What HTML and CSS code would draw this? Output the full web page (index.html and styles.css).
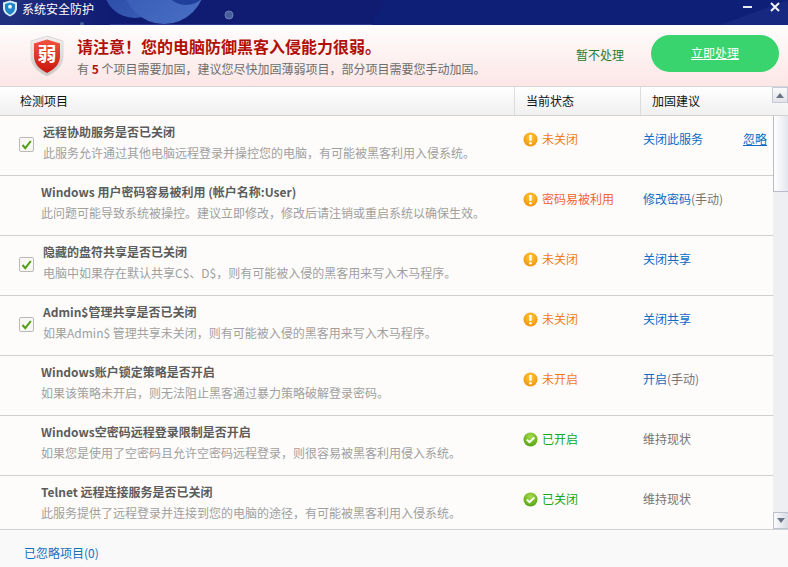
FILE: index.html
```html
<!DOCTYPE html>
<html lang="zh-CN">
<head>
<meta charset="utf-8">
<title>系统安全防护</title>
<link rel="stylesheet" href="styles.css">
</head>
<body>
<svg width="0" height="0" class="defs">
  <defs>
    <radialGradient id="warnG" cx="50%" cy="35%" r="70%"><stop offset="0" stop-color="#ffc93c"/><stop offset="1" stop-color="#f18f06"/></radialGradient>
    <radialGradient id="okG" cx="50%" cy="30%" r="75%"><stop offset="0" stop-color="#a6dc4a"/><stop offset="1" stop-color="#4f9f10"/></radialGradient>
    <linearGradient id="shieldG" x1="0" y1="0" x2="0" y2="1"><stop offset="0" stop-color="#f0f0f0"/><stop offset="1" stop-color="#c9c5c5"/></linearGradient>
    <linearGradient id="redG" x1="0" y1="0" x2="0" y2="1"><stop offset="0" stop-color="#f2533f"/><stop offset="1" stop-color="#c8150f"/></linearGradient>
    <symbol id="warn" viewBox="0 0 15 16"><circle cx="7.5" cy="7.5" r="7" fill="url(#warnG)"/><rect x="6.3" y="2.8" width="2.4" height="6.2" rx="1" fill="#fff"/><circle cx="7.5" cy="11.2" r="1.3" fill="#fff"/></symbol>
    <symbol id="ok" viewBox="0 0 15 16"><circle cx="7.5" cy="7.5" r="7" fill="url(#okG)"/><path d="M3.8 7.6l2.7 2.6 4.8-4.7" fill="none" stroke="#fff" stroke-width="2"/></symbol>
  </defs>
</svg>
<div class="app">
  <header class="titlebar">
    <svg class="title-art" viewBox="0 0 788 25" width="788" height="25" aria-hidden="true">
      <defs>
        <linearGradient id="artA" x1="0" y1="0" x2="1" y2="1"><stop offset="0" stop-color="#27459f"/><stop offset="1" stop-color="#3a5fba"/></linearGradient>
        <linearGradient id="artB" x1="0" y1="0" x2="1" y2="1"><stop offset="0" stop-color="#2f55b0"/><stop offset="1" stop-color="#4a6fc4"/></linearGradient>
        <linearGradient id="artL" x1="0" y1="0" x2="1" y2="0"><stop offset="0" stop-color="#22317f"/><stop offset="1" stop-color="#101c72"/></linearGradient>
      </defs>
      <rect width="110" height="25" fill="url(#artL)"/>
      <path d="M385 0H788V25H372Z" fill="#0e1f78"/>
      <path d="M720 25L788 0V25Z" fill="#16287f"/>
      <circle cx="135" cy="-14" r="32" fill="url(#artA)"/>
      <circle cx="164" cy="-17" r="41" fill="url(#artB)"/>
      <circle cx="186" cy="-18" r="23" fill="#1f3f9c"/>
      <circle cx="229" cy="15" r="4" fill="#46609f" stroke="#6c80b3"/>
      <circle cx="82" cy="24" r="2" fill="#46609f"/>
    </svg>
    <svg class="app-icon" width="16" height="17" viewBox="0 0 16 17" aria-hidden="true">
      <path d="M8 .5L15 2.500V8c0 4-3 7-7 8.500C4 15 1 12 1 8V2.500Z" fill="#d6ecf7"/>
      <path d="M8 2.500L13 4v4.200C13 11 11 13.500 8 14.700 5 13.500 3 11 3 8.200V4Z" fill="#1f84c9"/>
      <path d="M8 4.500l2 1.500-.7 2.500H6.700L6 6Z" fill="#eaf6fc"/>
    </svg>
    <span class="app-name">系统安全防护</span>
    <div class="win-btns">
      <svg width="9" height="2" viewBox="0 0 9 2" aria-hidden="true"><rect width="9" height="2" fill="#e8ebf5"/></svg>
      <svg width="10" height="10" viewBox="0 0 10 10" aria-hidden="true"><path d="M1 1l8 8M9 1l-8 8" stroke="#f2f4fa" stroke-width="2"/></svg>
    </div>
  </header>

  <section class="hero">
    <svg class="hero-shield" width="38" height="42" viewBox="0 0 38 42" aria-hidden="true">
      <path d="M19 1L35 6V21C35 31 28 37 19 41 10 37 3 31 3 21V6Z" fill="url(#shieldG)" stroke="#dcd8d8"/>
      <path d="M19 4.500L32 8.500V21C32 29.500 26 34.500 19 38 12 34.500 6 29.500 6 21V8.500Z" fill="url(#redG)"/>
      <text x="19" y="26" text-anchor="middle" class="shield-text">弱</text>
    </svg>
    <div class="hero-text">
      <h1 class="hero-title">请注意！您的电脑防御黑客入侵能力很弱。</h1>
      <p class="hero-sub">有 <b class="hero-num">5</b> 个项目需要加固，建议您尽快加固薄弱项目，部分项目需要您手动加固。</p>
    </div>
    <a class="later">暂不处理</a>
    <a class="go">立即处理</a>
  </section>

  <div class="thead">
    <div class="th th-item">检测项目</div>
    <div class="th th-status">当前状态</div>
    <div class="th th-advice">加固建议</div>
    <div class="sb-up"><i class="tri-up"></i></div>
  </div>

  <div class="body">
    <div class="rows">
      <div class="row">
        <div class="cell-item checked">
          <span class="check"><svg width="11" height="10" viewBox="0 0 11 10" aria-hidden="true"><path d="M1.500 5l2.800 3.200L9.800 1" fill="none" stroke="#4f9e12" stroke-width="2"/></svg></span>
          <div><div class="t">远程协助服务是否已关闭</div><div class="d">此服务允许通过其他电脑远程登录并操控您的电脑，有可能被黑客利用入侵系统。</div></div>
        </div>
        <div class="cell-status warn"><svg class="si"><use href="#warn"/></svg>未关闭</div>
        <div class="cell-act"><a class="lnk">关闭此服务</a><a class="ignore">忽略</a></div>
      </div>
      <div class="row">
        <div class="cell-item">
          <div><div class="t">Windows 用户密码容易被利用 (帐户名称:User)</div><div class="d">此问题可能导致系统被操控。建议立即修改，修改后请注销或重启系统以确保生效。</div></div>
        </div>
        <div class="cell-status warn2"><svg class="si"><use href="#warn"/></svg>密码易被利用</div>
        <div class="cell-act"><a class="lnk">修改密码</a><span class="plain">(手动)</span></div>
      </div>
      <div class="row">
        <div class="cell-item checked">
          <span class="check"><svg width="11" height="10" viewBox="0 0 11 10" aria-hidden="true"><path d="M1.500 5l2.800 3.200L9.800 1" fill="none" stroke="#4f9e12" stroke-width="2"/></svg></span>
          <div><div class="t">隐藏的盘符共享是否已关闭</div><div class="d">电脑中如果存在默认共享C$、D$，则有可能被入侵的黑客用来写入木马程序。</div></div>
        </div>
        <div class="cell-status warn"><svg class="si"><use href="#warn"/></svg>未关闭</div>
        <div class="cell-act"><a class="lnk">关闭共享</a></div>
      </div>
      <div class="row">
        <div class="cell-item checked">
          <span class="check"><svg width="11" height="10" viewBox="0 0 11 10" aria-hidden="true"><path d="M1.500 5l2.800 3.200L9.800 1" fill="none" stroke="#4f9e12" stroke-width="2"/></svg></span>
          <div><div class="t">Admin$管理共享是否已关闭</div><div class="d">如果Admin$ 管理共享未关闭，则有可能被入侵的黑客用来写入木马程序。</div></div>
        </div>
        <div class="cell-status warn"><svg class="si"><use href="#warn"/></svg>未关闭</div>
        <div class="cell-act"><a class="lnk">关闭共享</a></div>
      </div>
      <div class="row">
        <div class="cell-item">
          <div><div class="t">Windows账户锁定策略是否开启</div><div class="d">如果该策略未开启，则无法阻止黑客通过暴力策略破解登录密码。</div></div>
        </div>
        <div class="cell-status warn"><svg class="si"><use href="#warn"/></svg>未开启</div>
        <div class="cell-act"><a class="lnk">开启</a><span class="plain">(手动)</span></div>
      </div>
      <div class="row">
        <div class="cell-item">
          <div><div class="t">Windows空密码远程登录限制是否开启</div><div class="d">如果您是使用了空密码且允许空密码远程登录，则很容易被黑客利用侵入系统。</div></div>
        </div>
        <div class="cell-status good"><svg class="si"><use href="#ok"/></svg>已开启</div>
        <div class="cell-act"><span class="plain">维持现状</span></div>
      </div>
      <div class="row">
        <div class="cell-item">
          <div><div class="t">Telnet 远程连接服务是否已关闭</div><div class="d">此服务提供了远程登录并连接到您的电脑的途径，有可能被黑客利用入侵系统。</div></div>
        </div>
        <div class="cell-status good"><svg class="si"><use href="#ok"/></svg>已关闭</div>
        <div class="cell-act"><span class="plain">维持现状</span></div>
      </div>
    </div>
    <div class="scrollbar">
      <div class="thumb"></div>
      <div class="sb-down"><i class="tri-down"></i></div>
    </div>
  </div>

  <footer class="foot"><a class="ignored">已忽略项目(0)</a></footer>
</div>
</body>
</html>
```

FILE: styles.css
```css
* { box-sizing: border-box; }
html, body { margin: 0; padding: 0; }
body {
  font-family: "Noto Sans CJK SC", "Liberation Sans", sans-serif;
  font-size: 12px;
  background: #fdfcfb;
  overflow: hidden;
}
.defs { position: absolute; }
.app { width: 788px; height: 567px; display: flex; flex-direction: column; overflow: hidden; }

.titlebar {
  position: relative;
  flex: 0 0 25px;
  display: flex;
  align-items: center;
  padding-left: 0;
  background: #101c72;
  border-bottom: 1px solid #2c3a8e;
}
.title-art { position: absolute; left: 0; top: 0; }
.app-icon { position: relative; margin-left: 2px; margin-right: 4px; margin-top: -8px; }
.app-name { position: relative; color: #fff; font-size: 12px; margin-top: -8px; }
.win-btns { position: relative; margin-left: auto; display: flex; align-items: center; gap: 18px; padding-right: 8px; margin-top: -10px; }

.hero {
  flex: 0 0 62px;
  display: flex;
  align-items: center;
  padding-left: 28px;
  background: linear-gradient(#fffdfd, #fce6e6);
  border-bottom: 1px solid #d5d6da;
}
.hero-shield { flex: none; margin-right: 11px; }
.shield-text { font-size: 19px; font-weight: 700; fill: #fff; font-family: "Noto Sans CJK SC", sans-serif; }
.hero-text { width: 499px; margin-top: 1px; }
.hero-title { margin: 0; font-size: 16px; line-height: 22px; font-weight: 700; color: #b01007; }
.hero-sub { margin: 4px 0 0; font-size: 12px; line-height: 16px; color: #6d6d6d; white-space: nowrap; }
.hero-num { color: #b01007; }
.later { width: 47px; margin-right: 28px; margin-top: -3px; color: #2a7a2a; white-space: nowrap; }
.go {
  width: 128px; height: 37px; margin-top: -4px; border-radius: 19px;
  background: #39d46d; color: #fff; text-align: center; line-height: 35px;
  text-decoration: underline; text-underline-offset: 1px;
}

.thead {
  flex: 0 0 29px;
  display: flex;
  background: linear-gradient(#ffffff, #f0f0f0);
  border-bottom: 1px solid #d2d2d2;
  color: #111;
}
.th { line-height: 27px; white-space: nowrap; }
.th-item { width: 515px; padding-left: 20px; border-right: 1px solid #dcdcdc; }
.th-status { width: 126px; padding-left: 11px; border-right: 1px solid #dcdcdc; }
.th-advice { width: 131px; padding-left: 11px; }
.sb-up {
  width: 16px; height: 16px;
  background: linear-gradient(#fafafa, #e2e4ea);
  border: 1px solid #c6cad4;
  display: flex; align-items: center; justify-content: center;
}
.tri-up { width: 0; height: 0; border-left: 4px solid transparent; border-right: 4px solid transparent; border-bottom: 5px solid #6b7386; }
.tri-down { width: 0; height: 0; border-left: 4px solid transparent; border-right: 4px solid transparent; border-top: 5px solid #6b7386; }

.body { flex: 0 0 414px; display: flex; border-bottom: 1px solid #d2d2d2; overflow: hidden; }
.rows { width: 773px; overflow: hidden; }
.row {
  height: 60px;
  display: grid;
  grid-template-columns: 515px 128px 1fr;
  border-bottom: 1px solid #cfcfcf;
  background: #fdfcfb;
}
.cell-item { display: flex; padding: 7px 0 0 41px; white-space: nowrap; }
.cell-item.checked { padding-left: 19px; }
.check {
  flex: none; width: 15px; height: 15px; margin: 14px 9px 0 0;
  background: #f7f7f5; border: 1px solid #b9b9b5; border-radius: 2px;
  display: flex; align-items: center; justify-content: center;
}
.t { font-weight: 700; color: #5c5c5c; line-height: 18px; }
.d { color: #a0a0a0; line-height: 18px; margin-top: 3px; }
.cell-status, .cell-act { display: flex; align-items: flex-start; padding-top: 14px; line-height: 18px; white-space: nowrap; }
.cell-status { padding-left: 8px; }
.si { flex: none; width: 15px; height: 16px; margin: 2px 4px 0 0; }
.warn { color: #f27d14; }
.warn2 { color: #f0662e; }
.good { color: #14a80e; }
.lnk { color: #0d6bc6; }
.plain { color: #757575; }
.ignore { position: absolute; left: 743px; color: #0d6bc6; text-decoration: underline; }

.scrollbar { width: 15px; display: flex; flex-direction: column; background: #eeeff3; }
.thumb {
  height: 76px;
  background: linear-gradient(90deg, #ffffff, #e4e6ee);
  border: 1px solid #b8bcc8;
  border-top: 0;
  border-right: 0;
}
.sb-down {
  margin-top: auto;
  height: 17px;
  background: linear-gradient(90deg, #fbfbfc, #d8dbe4);
  border: 1px solid #bcc2cf;
  border-right: 0;
  display: flex; align-items: center; justify-content: center;
}

.foot { flex: 1; background: #f9f9f9; padding: 14px 0 0 24px; line-height: 18px; }
.ignored { color: #1170bd; }
```
